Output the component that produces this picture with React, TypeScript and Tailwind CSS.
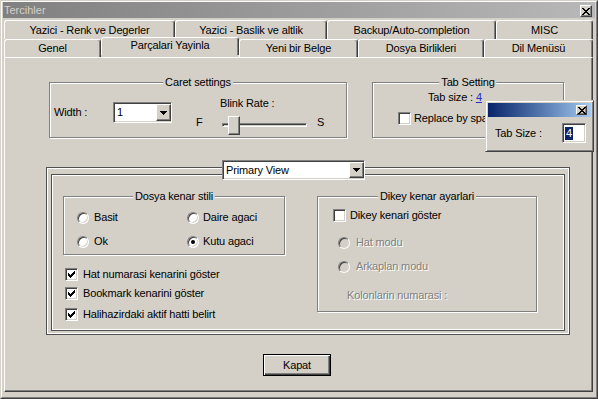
import React from "react";

const raised =
  "border border-t-white border-l-white border-r-[#404040] border-b-[#404040] shadow-[inset_-1px_-1px_0_#808080]";
const sunken =
  "border border-t-[#808080] border-l-[#808080] border-r-white border-b-white shadow-[inset_1px_1px_0_#404040,inset_-1px_-1px_0_#d4d0c8]";
const tabCls =
  "h-full shrink-0 flex items-center justify-center border-t border-l border-r border-t-white border-l-white border-r-[#404040] shadow-[inset_-1px_0_0_#808080] rounded-t-[3px] whitespace-nowrap";

function Arrow() {
  return (
    <svg width="7" height="4" viewBox="0 0 7 4" shapeRendering="crispEdges">
      <path d="M0 0h7v1h-1v1h-1v1h-1v1h-1v-1h-1v-1h-1v-1h-1z" fill="#000" />
    </svg>
  );
}

function CloseGlyph() {
  return (
    <svg width="8" height="7" viewBox="0 0 8 7" shapeRendering="crispEdges">
      <path
        d="M0 0h2v1h1v1h2v-1h1v-1h2v1h-1v1h-1v1h-1v1h1v1h1v1h1v1h-2v-1h-1v-1h-2v1h-1v1h-2v-1h1v-1h1v-1h1v-1h-1v-1h-1v-1h-1z"
        fill="#000"
      />
    </svg>
  );
}

function CheckMark() {
  const cols = [2, 3, 4, 3, 2, 1, 0];
  return (
    <svg width="7" height="7" viewBox="0 0 7 7" shapeRendering="crispEdges">
      {cols.map((y, x) => (
        <rect key={x} x={x} y={y} width="1" height="3" fill="#000" />
      ))}
    </svg>
  );
}

function Check({ checked = false }: { checked?: boolean }) {
  return (
    <div className={`w-[13px] h-[13px] shrink-0 bg-white flex items-center justify-center ${sunken}`}>
      {checked && <CheckMark />}
    </div>
  );
}

function Radio({ checked = false, disabled = false }: { checked?: boolean; disabled?: boolean }) {
  return (
    <div
      className={`w-[12px] h-[12px] shrink-0 rounded-full flex items-center justify-center border border-t-[#808080] border-l-[#808080] border-r-white border-b-white shadow-[inset_1px_1px_0_#404040,inset_-1px_-1px_0_#d4d0c8] ${
        disabled ? "bg-[#d4d0c8]" : "bg-white"
      }`}
    >
      {checked && <div className="w-[4px] h-[4px] rounded-full bg-black" />}
    </div>
  );
}

function Group({
  title,
  className,
  children,
}: {
  title: string;
  className: string;
  children?: React.ReactNode;
}) {
  return (
    <div className={`relative shrink-0 border border-[#808080] shadow-[inset_1px_1px_0_#fff,1px_1px_0_#fff] ${className}`}>
      <span className="absolute left-1/2 -translate-x-1/2 top-[-7px] bg-[#d4d0c8] px-[2px] leading-[13px] whitespace-nowrap">
        {title}
      </span>
      {children}
    </div>
  );
}

const disabledText = "text-[#808080] [text-shadow:1px_1px_0_#fff]";

export default function App() {
  return (
    <div className="w-[598px] h-[399px] overflow-hidden bg-[#d4d0c8] font-['Liberation_Sans',Arial,sans-serif] text-[11px] leading-[13px] tracking-[-0.15px] text-black border border-t-[#d4d0c8] border-l-[#d4d0c8] border-r-[#404040] border-b-[#404040]">
      <div className="relative h-full border border-t-white border-l-white border-r-[#808080] border-b-[#808080] px-px">
        {/* Title bar */}
        <div className="h-[16px] flex items-center justify-between pl-px pr-[3px] bg-linear-to-r from-[#808080] to-[#b8b8b8]">
          <span className="text-[#d4d0c8] tracking-normal">Tercihler</span>
          <div className={`w-[12px] h-[12px] mt-[2px] bg-[#d4d0c8] flex items-center justify-center ${raised}`}>
            <CloseGlyph />
          </div>
        </div>

        {/* Tabs */}
        <div className="ml-px mt-[2px] w-[589px]">
          <div className="flex h-[19px]">
            <div className={`${tabCls} w-[171px]`}>Yazici - Renk ve Degerler</div>
            <div className={`${tabCls} w-[152px]`}>Yazici - Baslik ve altlik</div>
            <div className={`${tabCls} w-[169px]`}>Backup/Auto-completion</div>
            <div className={`${tabCls} w-[97px]`}>MISC</div>
          </div>
          <div className="flex h-[18px] items-start">
            <div className={`${tabCls} w-[97px]`}>Genel</div>
            <div
              className={`${tabCls} relative z-10 w-[138px] h-[21px] -mt-[2px] -mb-[1px] pb-[3px] bg-[#d4d0c8]`}
            >
              Parçalari Yayinla
            </div>
            <div className={`${tabCls} w-[119px]`}>Yeni bir Belge</div>
            <div className={`${tabCls} w-[126px]`}>Dosya Birlikleri</div>
            <div className={`${tabCls} w-[109px]`}>Dil Menüsü</div>
          </div>

          {/* Panel */}
          <div className="w-[589px] h-[335px] border border-t-white border-l-white border-r-[#404040] border-b-[#404040] shadow-[inset_-1px_-1px_0_#808080]">
            {/* Top row */}
            <div className="flex mt-[24px] ml-[44px]">
              <Group title="Caret settings" className="w-[298px] h-[56px]">
                <div className="flex items-start pl-[4px]">
                  <div className="w-[59px] h-[21px] mt-[19px] flex items-center">Width :</div>
                  <div className={`w-[59px] h-[21px] mt-[19px] bg-white flex items-center justify-between pl-[2px] ${sunken}`}>
                    <span className="pl-px">1</span>
                    <div className={`w-[15px] h-[17px] bg-[#d4d0c8] flex items-center justify-center ${raised}`}>
                      <Arrow />
                    </div>
                  </div>
                  <div className="ml-[24px] flex flex-col">
                    <div className="pl-[24px] mt-[14px]">Blink Rate :</div>
                    <div className="flex items-start h-[19px] mt-[6px]">
                      <span className="w-[26px]">F</span>
                      <div className={`relative w-[85px] h-[4px] mt-[7px] bg-[#d4d0c8] ${sunken}`}>
                        <div className={`absolute left-[5px] top-[-8px] w-[12px] h-[19px] bg-[#d4d0c8] ${raised}`} />
                      </div>
                      <span className="ml-[10px]">S</span>
                    </div>
                  </div>
                </div>
              </Group>

              <Group title="Tab Setting" className="ml-[25px] w-[192px] h-[56px]">
                <div className="pl-[55px] mt-[8px]">
                  Tab size : <span className="text-[#2a2acc] underline">4</span>
                </div>
                <div className="flex items-center pl-[25px] mt-[8px]">
                  <Check />
                  <span className="ml-[3px] whitespace-nowrap">Replace by space</span>
                </div>
              </Group>
            </div>

            {/* Main frame */}
            <div className="relative ml-[41px] mt-[29px] w-[524px] h-[168px] border border-[#505050] shadow-[inset_1px_1px_0_#fff,inset_-1px_-1px_0_#fff] pt-[6px] px-[4px] pb-[3px]">
              <div className={`absolute left-[175px] top-[-8px] z-10 w-[143px] h-[20px] bg-white flex items-center justify-between pl-[3px] ${sunken}`}>
                <span>Primary View</span>
                <div className={`w-[15px] h-[16px] bg-[#d4d0c8] flex items-center justify-center ${raised}`}>
                  <Arrow />
                </div>
              </div>

              <div className="h-full border border-[#505050] shadow-[inset_1px_1px_0_#fff,inset_-1px_-1px_0_#fff] flex pl-[11px] pt-[21px]">
                {/* Left column */}
                <div className="flex flex-col w-[222px]">
                  <Group title="Dosya kenar stili" className="w-[222px] h-[59px]">
                    <div className="grid grid-cols-[110px_100px] gap-y-[11px] pl-[13px] pt-[14px]">
                      <div className="flex items-center">
                        <Radio />
                        <span className="ml-[5px]">Basit</span>
                      </div>
                      <div className="flex items-center">
                        <Radio />
                        <span className="ml-[4px]">Daire agaci</span>
                      </div>
                      <div className="flex items-center">
                        <Radio />
                        <span className="ml-[5px]">Ok</span>
                      </div>
                      <div className="flex items-center">
                        <Radio checked />
                        <span className="ml-[4px]">Kutu agaci</span>
                      </div>
                    </div>
                  </Group>
                  <div className="flex items-center ml-[2px] mt-[13px]">
                    <Check checked />
                    <span className="ml-[5px] whitespace-nowrap">Hat numarasi kenarini göster</span>
                  </div>
                  <div className="flex items-center ml-[2px] mt-[6px]">
                    <Check checked />
                    <span className="ml-[5px] whitespace-nowrap">Bookmark kenarini göster</span>
                  </div>
                  <div className="flex items-center ml-[2px] mt-[8px]">
                    <Check checked />
                    <span className="ml-[5px] whitespace-nowrap">Halihazirdaki aktif hatti belirt</span>
                  </div>
                </div>

                {/* Right column */}
                <Group title="Dikey kenar ayarlari" className="ml-[32px] w-[220px] h-[116px]">
                  <div className="flex flex-col pl-[15px]">
                    <div className="flex items-center mt-[12px]">
                      <Check />
                      <span className="ml-[4px]">Dikey kenari göster</span>
                    </div>
                    <div className="flex items-center mt-[14px] ml-[5px]">
                      <Radio disabled />
                      <span className={`ml-[6px] ${disabledText}`}>Hat modu</span>
                    </div>
                    <div className="flex items-center mt-[11px] ml-[5px]">
                      <Radio disabled />
                      <span className={`ml-[6px] ${disabledText}`}>Arkaplan modu</span>
                    </div>
                    <div className={`mt-[16px] ml-[14px] ${disabledText}`}>Kolonlarin numarasi :</div>
                  </div>
                </Group>
              </div>
            </div>

            {/* Kapat */}
            <div className="mt-[19px] ml-[258px] w-[68px] h-[22px] flex items-center justify-center border border-black shadow-[inset_1px_1px_0_#fff,inset_-1px_-1px_0_#404040,inset_-2px_-2px_0_#808080]">
              Kapat
            </div>
          </div>
        </div>

        {/* Floating Tab Size popup */}
        <div className="absolute left-[483px] top-[98px] z-20 w-[109px] h-[52px] bg-[#d4d0c8] border border-t-[#d4d0c8] border-l-[#d4d0c8] border-r-[#404040] border-b-[#404040] shadow-[inset_1px_1px_0_#fff,inset_-1px_-1px_0_#808080] p-[2px] flex flex-col">
          <div className="h-[14px] bg-linear-to-r from-[#0a246a] to-[#a6caf0] flex items-center justify-end pr-[4px]">
            <div className={`w-[11px] h-[10px] bg-[#d4d0c8] flex items-center justify-center ${raised}`}>
              <CloseGlyph />
            </div>
          </div>
          <div className="flex items-center h-[20px] mt-[6px] pl-[7px] pr-[5px]">
            <span className="whitespace-nowrap">Tab Size :</span>
            <div className={`ml-auto w-[24px] h-[20px] bg-white flex items-center pl-[2px] ${sunken}`}>
              <span className="bg-[#0a246a] text-white px-px leading-[13px]">4</span>
            </div>
          </div>
        </div>
      </div>
    </div>
  );
}
